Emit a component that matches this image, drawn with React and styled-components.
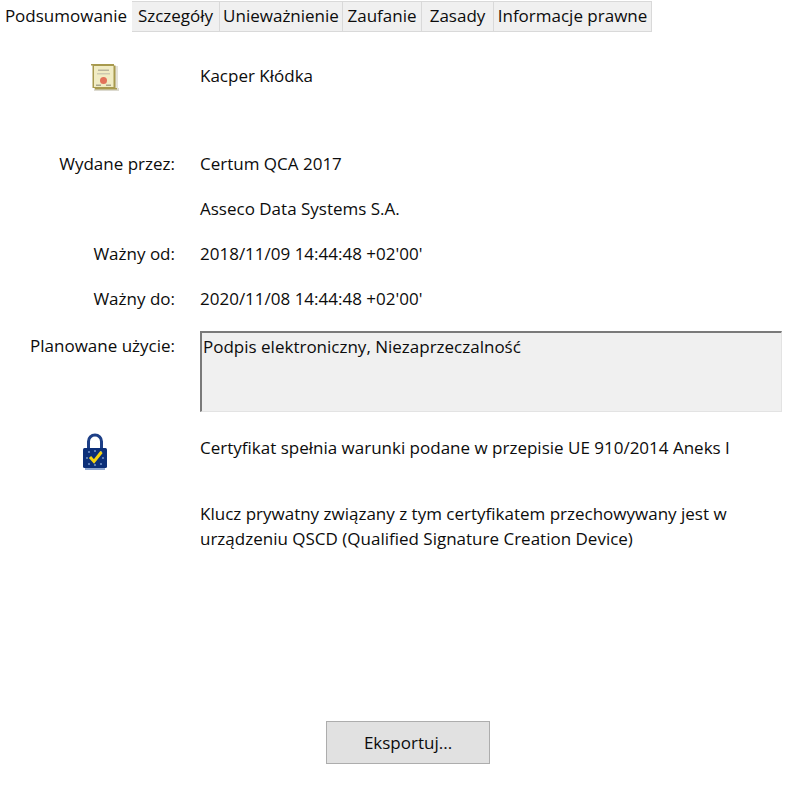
import React from "react";
import styled, { createGlobalStyle } from "styled-components";

const GlobalStyle = createGlobalStyle`
    html, body { margin: 0; padding: 0; background: #fff; }
    body { font-family: "Open Sans", "Noto Sans", sans-serif; font-size: 17px; color: #0c0c0c; }
`;

const Page = styled.div`
    width: 810px;
    height: 796px;
    display: flex;
    flex-direction: column;
    overflow: hidden;
`;

const TabBar = styled.div`
    display: flex;
    height: 31px;
    margin-top: 1px;
`;

const Tab = styled.div`
    width: ${p => p.$width}px;
    box-sizing: border-box;
    display: flex;
    align-items: center;
    justify-content: center;
    white-space: nowrap;
    background: ${p => p.$active ? "#fff" : "#f0f0f0"};
    border: ${p => p.$active ? "none" : "1px solid #d9d9d9"};
    border-left: none;
    padding-bottom: 2px;
`;

const Body = styled.div`
    display: grid;
    grid-template-columns: 175px 1fr;
    column-gap: 25px;
    padding-top: 30px;
    padding-right: 28px;
`;

const IconCell = styled.div`
    display: flex;
    justify-content: center;
    padding-left: ${p => p.$shift}px;
    height: ${p => p.$height}px;
`;

const Label = styled.div`
    box-sizing: border-box;
    text-align: right;
    line-height: 24px;
    height: ${p => p.$height || 45}px;
    padding-top: ${p => p.$top || 0}px;
`;

const Value = styled.div`
    box-sizing: border-box;
    line-height: 24px;
    height: ${p => p.$height || 45}px;
    padding-top: ${p => p.$top || 0}px;
`;

const UsageBox = styled.div`
    box-sizing: border-box;
    height: 81px;
    margin-top: -1px;
    background: #f0f0f0;
    border-top: 2px solid #7a7a7a;
    border-left: 2px solid #7a7a7a;
    border-right: 1px solid #e3e3e3;
    border-bottom: 1px solid #e3e3e3;
    padding: 2px 1px;
    line-height: 24px;
`;

const Note = styled.div`
    box-sizing: border-box;
    line-height: 25px;
    height: ${p => p.$height}px;
    padding-top: ${p => p.$top || 0}px;
`;

const Footer = styled.div`
    margin-top: auto;
    margin-bottom: 32px;
    display: flex;
    justify-content: center;
    padding-left: 6px;
`;

const ExportButton = styled.button`
    width: 164px;
    height: 43px;
    box-sizing: border-box;
    background: #e1e1e1;
    border: 1px solid #adadad;
    font: inherit;
    color: inherit;
    padding: 0;
`;

const CertificateIcon = () => (
    <svg width="30" height="30" viewBox="0 0 30 30">
        <rect x="5" y="26" width="25" height="3" fill="#dcdad0" />
        <rect x="26" y="4" width="3" height="23" fill="#e4e2da" />
        <path d="M2 2h23v1.500h1.500V26H28v1.500H6V26H3.500V3.500H2z" fill="#a89a4e" />
        <path d="M5 4h19.500v21H5z" fill="#f1ecc4" />
        <rect x="9" y="7.500" width="11" height="1.500" fill="#b9b59c" />
        <rect x="8" y="11" width="13" height="1.500" fill="#cfcbb0" />
        <circle cx="14.500" cy="18.500" r="3.500" fill="#e2725a" />
        <rect x="7" y="22.500" width="5" height="1.500" fill="#a9a58c" />
        <rect x="17" y="22.500" width="5" height="1.500" fill="#a9a58c" />
    </svg>
);

const LockIcon = () => (
    <svg width="26" height="38" viewBox="0 0 26 38">
        <path d="M6.500 16V8.500a6.500 6.500 0 0 1 13 0V16" fill="none" stroke="#1d3f87" strokeWidth="3" />
        <rect x="1" y="15" width="24" height="20" rx="1.500" fill="#0c2f78" />
        <rect x="3" y="35" width="20" height="2" fill="#8ea6cf" />
        {[[7, 19], [13, 18], [19, 19], [5, 25], [21, 25], [7, 31], [13, 32], [19, 31]].map(([x, y]) => (
            <circle key={`${x}${y}`} cx={x} cy={y} r="1.100" fill="#6f8fc4" />
        ))}
        <path d="M8 24l4 4.500L19.500 19" fill="none" stroke="#f6d40f" strokeWidth="3" />
    </svg>
);

const tabs = [
    ["Podsumowanie", 132],
    ["Szczegóły", 88],
    ["Unieważnienie", 123],
    ["Zaufanie", 79],
    ["Zasady", 72],
    ["Informacje prawne", 158],
];

const details = [
    ["Wydane przez:", "Certum QCA 2017"],
    ["", "Asseco Data Systems S.A."],
    ["Ważny od:", "2018/11/09 14:44:48 +02'00'"],
    ["Ważny do:", "2020/11/08 14:44:48 +02'00'"],
];

export default function App() {
    return (
        <Page>
            <GlobalStyle />
            <TabBar>
                {tabs.map(([name, width], i) => (
                    <Tab key={name} $width={width} $active={i === 0}>{name}</Tab>
                ))}
            </TabBar>
            <Body>
                <IconCell $height={90} $shift={33}><CertificateIcon /></IconCell>
                <Value $height={90} $top={2}>Kacper Kłódka</Value>
                {details.map(([label, value]) => (
                    <React.Fragment key={value}>
                        <Label>{label}</Label>
                        <Value>{value}</Value>
                    </React.Fragment>
                ))}
                <Label $height={101} $top={2}>Planowane użycie:</Label>
                <Value $height={101}><UsageBox>Podpis elektroniczny, Niezaprzeczalność</UsageBox></Value>
                <IconCell $height={68} $shift={15}><LockIcon /></IconCell>
                <Note $height={68} $top={2}>Certyfikat spełnia warunki podane w przepisie UE 910/2014 Aneks I</Note>
                <div />
                <Note>Klucz prywatny związany z tym certyfikatem przechowywany jest w urządzeniu QSCD (Qualified Signature Creation Device)</Note>
            </Body>
            <Footer><ExportButton>Eksportuj...</ExportButton></Footer>
        </Page>
    );
}
